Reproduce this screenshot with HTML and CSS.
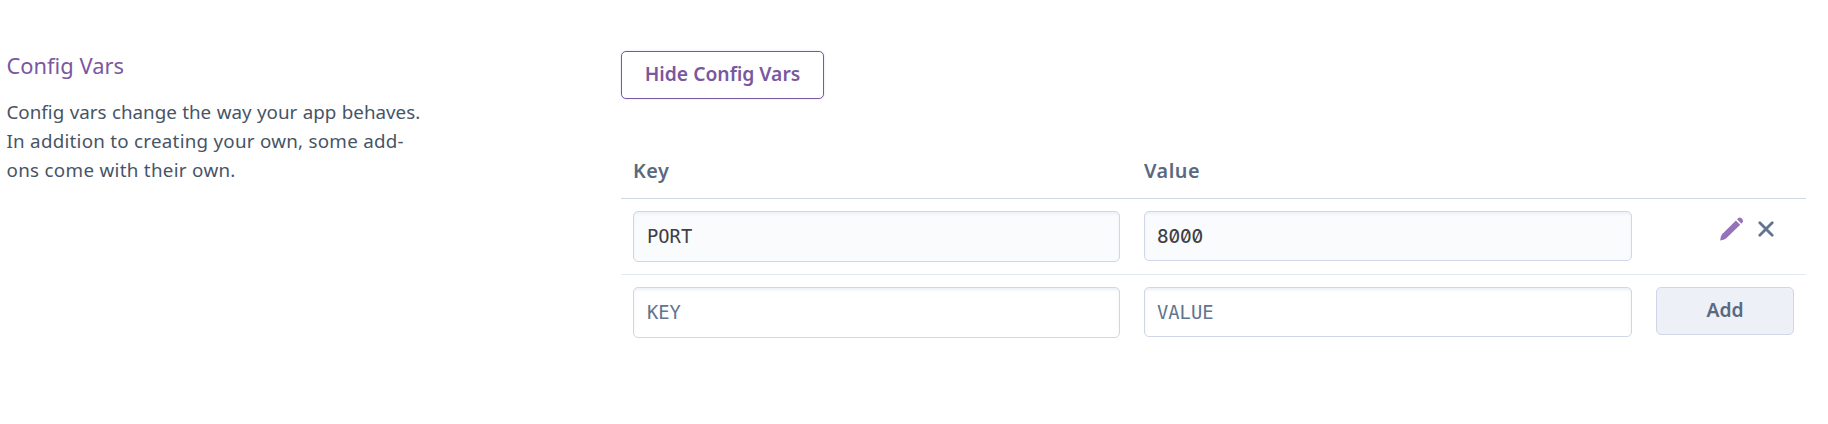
FILE: index.html
```html
<!DOCTYPE html>
<html lang="en">
<head>
<meta charset="utf-8">
<title>Config Vars</title>
<link rel="stylesheet" href="styles.css">
</head>
<body>
<main class="settings">
  <section class="intro">
    <h2 class="title"><span>Config Vars</span></h2>
    <p class="text"><span class="l1">Config vars change the way your app behaves.</span><br><span class="l2">In addition to creating your own, some add-</span><br><span class="l3">ons come with their own.</span></p>
  </section>
  <section class="panel">
    <button class="btn toggle"><span>Hide Config Vars</span></button>
    <div class="table">
      <div class="row head"><span class="hkey"><b>Key</b></span><span><b>Value</b></span></div>
      <div class="row saved">
        <input class="field key" value="PORT" readonly>
        <input class="field val number" value="8000" readonly>
        <div class="actions">
          <svg class="pencil" width="24" height="24" viewBox="0 0 24 24"><defs><linearGradient id="g" x1="0" y1="0" x2="1" y2="1"><stop offset="0" stop-color="#9c7bc0"/><stop offset="1" stop-color="#8e6bb4"/></linearGradient></defs><path fill="url(#g)" d="M.2 23.5Q.4 19.5 2 17.2L15.9 3.6l4.3 4.2L6 21.4Q4 23 .2 23.5zM17 2.3 18.3 1.1Q19.7 0 21.2 1.1l1.4 1.5Q23.7 4 22.6 5.3L21.3 6.7z"/></svg>
          <svg class="cross" width="16" height="16" viewBox="0 0 16 16"><path d="M1.8 1.8 14.2 14.2M14.2 1.8 1.8 14.2" fill="none" stroke="#62748e" stroke-width="2.8" stroke-linecap="round"/></svg>
        </div>
      </div>
      <div class="row fresh">
        <input class="field key" placeholder="KEY">
        <input class="field val" placeholder="VALUE">
        <button class="btn add"><span>Add</span></button>
      </div>
    </div>
  </section>
</main>
</body>
</html>
```
FILE: styles.css
```css
* { box-sizing: border-box; }
body { margin: 0; background: #fff; font-family: "Noto Sans", sans-serif; }
.settings { display: grid; grid-template-columns: 614.5px 1185px; padding: 51px 0 0 6.5px; height: 424px; }
.title { margin: 0; font-size: 21.9px; line-height: 30px; font-weight: 400; color: #79589f; }
.text { margin: 17px 0 0; font-size: 18.8px; line-height: 29px; color: #475466; white-space: nowrap; }
.l1 { word-spacing: .55px; }
.l2 { letter-spacing: .25px; }
.l3 { letter-spacing: .3px; }
.btn { display: block; margin: 0; padding: 0 0 2px; border-radius: 5px; font: 600 19.3px/24px "Noto Sans", sans-serif; }
.toggle { width: 203px; height: 48px; border: 1px solid #79589f; background: #fff; color: #79589f; box-shadow: 0 0 2px #cfd7e6; }
.table { margin-top: 46px; }
.row { display: grid; grid-template-columns: 487px 488px 138px; column-gap: 24px; padding: 12px 12px 0; height: 76px; align-items: start; }
.head { height: 54px; padding-top: 12px; border-bottom: 1px solid #cfd7e6; font-size: 19.8px; line-height: 28px; letter-spacing: .5px; color: #596981; }
.head b { font-weight: 600; }
.saved { border-bottom: 1px solid #e3e8f1; }
.field { width: 100%; height: 50px; margin: 0; padding: 0 13px; border: 1px solid #cfd7e6; border-radius: 5px; background: #fff; box-shadow: inset 0 2px 3px #edf0f6; font: 18.8px "DejaVu Sans Mono", monospace; color: #3f3f44; }
.field.key { height: 51px; }
.field.val { padding-left: 12px; }
.field.number { font: 500 18px Inter, sans-serif; letter-spacing: -.2px; font-feature-settings: "zero", "tnum"; }
.saved .field { background: #fafbfd; }
.field::placeholder { color: #62748e; opacity: 1; }
.actions { display: flex; align-items: center; gap: 14px; padding: 6px 0 0 64px; }
.add { width: 138px; height: 48px; border: 1px solid #cfd7e6; background: #edf0f6; color: #596981; }
```
